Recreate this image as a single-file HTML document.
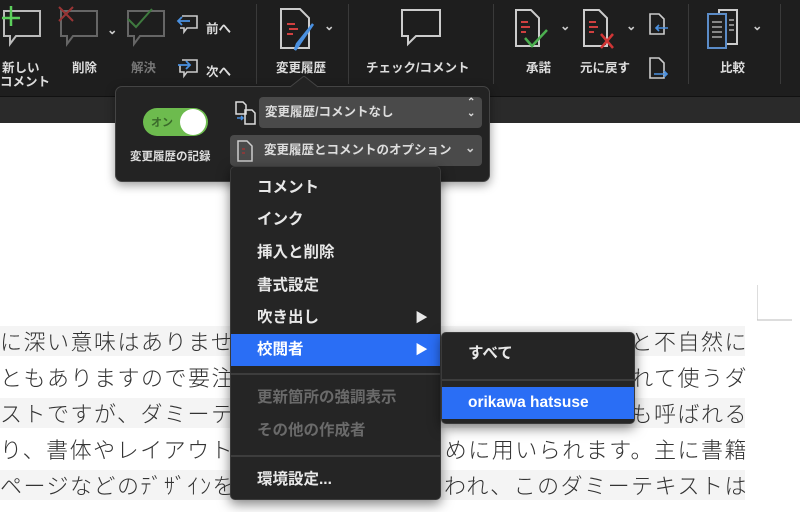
<!DOCTYPE html>
<html><head><meta charset="utf-8"><style>
*{margin:0;padding:0;box-sizing:border-box}
body{width:800px;height:512px;overflow:hidden;background:#fff;position:relative;font-family:"Liberation Sans","Noto Sans CJK JP",sans-serif}
.rib{position:absolute;left:0;top:0;width:800px;height:97px;background:#1e1e1e;border-bottom:1px solid #111}
.strip{position:absolute;left:0;top:97px;width:800px;height:26px;background:#2a2a2a}
.lbl{position:absolute;color:#ddd;font-size:12.5px;font-weight:bold;white-space:nowrap}
.sep{position:absolute;top:4px;width:1px;height:80px;background:#3a3a3a}
svg{position:absolute}
.doc{position:absolute;font-family:"Noto Sans CJK JP",sans-serif;font-size:22px;color:#333;white-space:nowrap;font-weight:300;letter-spacing:1.5px}
.r{right:52px;letter-spacing:1.5px}
.band{position:absolute;left:0;width:745px;height:30px;background:#f4f4f4}
.pop{position:absolute;left:115px;top:86px;width:375px;height:96px;background:#232323;border:1px solid #444;border-radius:7px;box-shadow:0 3px 10px rgba(0,0,0,.4)}
.menu{position:absolute;background:#252525;border:1px solid #3a3a3a;border-radius:5px;box-shadow:0 4px 12px rgba(0,0,0,.5)}
.mi{position:absolute;left:0;right:0;height:32px;line-height:32px;color:#e8e8e8;font-size:15.5px;font-weight:bold;padding-left:26px}
.hl{background:#2a6ef5;color:#fff}
.dis{color:#6a6a6a}
.msep{position:absolute;left:0;right:0;height:2px;background:#3d3d3d}
.ddl{position:absolute;background:#4a4a4a;border-radius:4px;color:#ddd;font-size:12.5px;font-weight:bold;padding-left:6px;line-height:30px}
</style></head><body>
<div class="rib"></div><div class="strip"></div>
<div class="sep" style="left:256px"></div><div class="sep" style="left:348px"></div><div class="sep" style="left:493px"></div><div class="sep" style="left:688px"></div><div class="sep" style="left:780px"></div>
<svg style="left:0;top:6px" width="45" height="42"><path d="M4 5H40V30H16L10 38V30H4Z" fill="none" stroke="#bbb" stroke-width="2"/><path d="M11 0V20M2 12H20" stroke="#5cd05c" stroke-width="2.5"/></svg>
<div class="lbl" style="left:2px;top:57px">新しい</div><div class="lbl" style="left:0;top:71px">コメント</div>
<svg style="left:57px;top:6px" width="45" height="42"><path d="M4 5H40V30H16L10 38V30H4Z" fill="none" stroke="#666" stroke-width="2"/><path d="M2 1L16 15M16 1L2 15" stroke="#9a3535" stroke-width="2"/></svg>
<div class="lbl" style="left:107px;top:22px;color:#ccc">⌄</div>
<div class="lbl" style="left:72px;top:57px">削除</div>
<svg style="left:124px;top:6px" width="45" height="42"><path d="M4 5H40V30H16L10 38V30H4Z" fill="none" stroke="#666" stroke-width="2"/><path d="M4 13L12 21L28 3" fill="none" stroke="#3f7a3f" stroke-width="2"/></svg>
<div class="lbl" style="left:131px;top:57px;color:#777">解決</div>
<svg style="left:176px;top:12px" width="24" height="24"><path d="M6 4H21V16H11L8 20V16H4" fill="none" stroke="#ccc" stroke-width="1.6"/><path d="M14 9H2M6 5L2 9L6 13" fill="none" stroke="#4a90e0" stroke-width="1.8"/></svg>
<div class="lbl" style="left:206px;top:18px">前へ</div>
<svg style="left:176px;top:56px" width="24" height="24"><path d="M6 4H21V16H11L8 20V16H4V9" fill="none" stroke="#ccc" stroke-width="1.6"/><path d="M2 9H14M10 5L14 9L10 13" fill="none" stroke="#4a90e0" stroke-width="1.8"/></svg>
<div class="lbl" style="left:206px;top:61px">次へ</div>
<svg style="left:278px;top:6px" width="42" height="46"><path d="M3 3H22L31 12V42H3Z" fill="none" stroke="#ccc" stroke-width="2"/><path d="M9 18H17M11 23H20M9 28H15" stroke="#d04040" stroke-width="2"/><path d="M35 18L20 40L17 44L19 38Z" fill="none" stroke="#4a90e0" stroke-width="2.5"/></svg>
<div class="lbl" style="left:324px;top:18px;color:#ccc">⌄</div>
<div class="lbl" style="left:276px;top:57px">変更履歴</div>
<svg style="left:400px;top:8px" width="44" height="40"><path d="M2 2H40V28H16L8 36V28H2Z" fill="none" stroke="#ccc" stroke-width="2"/></svg>
<div class="lbl" style="left:366px;top:57px">チェック/コメント</div>
<svg style="left:513px;top:8px" width="42" height="42"><path d="M3 2H18L26 10V38H3Z" fill="none" stroke="#ccc" stroke-width="2"/><path d="M8 14H15M8 19H17M8 24H13" stroke="#d04040" stroke-width="2"/><path d="M12 30L19 38L34 22" fill="none" stroke="#4caf50" stroke-width="2.5"/></svg>
<div class="lbl" style="left:560px;top:18px;color:#ccc">⌄</div>
<div class="lbl" style="left:526px;top:57px">承諾</div>
<svg style="left:581px;top:8px" width="42" height="42"><path d="M3 2H18L26 10V38H3Z" fill="none" stroke="#ccc" stroke-width="2"/><path d="M8 14H15M8 19H17M8 24H13" stroke="#d04040" stroke-width="2"/><path d="M20 26L32 40M32 26L20 40" stroke="#d03535" stroke-width="2.5"/></svg>
<div class="lbl" style="left:626px;top:18px;color:#ccc">⌄</div>
<div class="lbl" style="left:580px;top:57px">元に戻す</div>
<svg style="left:648px;top:12px" width="22" height="26"><path d="M2 2H11L16 7V22H2Z" fill="none" stroke="#ccc" stroke-width="1.6"/><path d="M20 16H8M11 13L8 16L11 19" fill="none" stroke="#4a90e0" stroke-width="1.6"/></svg>
<svg style="left:648px;top:56px" width="22" height="26"><path d="M2 2H11L16 7V22H2Z" fill="none" stroke="#ccc" stroke-width="1.6"/><path d="M6 18H19M16 15L19 18L16 21" fill="none" stroke="#4a90e0" stroke-width="1.6"/></svg>
<svg style="left:705px;top:8px" width="42" height="42"><path d="M14 2H32V36H14Z" fill="none" stroke="#ccc" stroke-width="2"/><path d="M3 6H21V40H3Z" fill="#1e1e1e" stroke="#5b8cc8" stroke-width="2"/><path d="M7 14H17M7 19H17M7 24H17M7 29H17M24 12H29M24 17H29M24 22H29" stroke="#aaa" stroke-width="1.5"/></svg>
<div class="lbl" style="left:752px;top:18px;color:#ccc">⌄</div>
<div class="lbl" style="left:720px;top:57px">比較</div>
<svg style="left:757px;top:285px" width="40" height="40"><path d="M0 0V35H35" fill="none" stroke="#bbb" stroke-width="1"/></svg>
<div class="band" style="top:326px"></div><div class="band" style="top:398px"></div><div class="band" style="top:470px"></div>
<div class="doc" style="left:0;top:325px">に深い意味はありませ</div><div class="doc r" style="top:325px">と不自然に</div>
<div class="doc" style="left:0;top:361px">ともありますので要注</div><div class="doc r" style="top:361px">れて使うダ</div>
<div class="doc" style="left:0;top:397px">ストですが、ダミーテ</div><div class="doc r" style="top:397px">も呼ばれる</div>
<div class="doc" style="left:0;top:433px">り、書体やレイアウト</div><div class="doc r" style="top:433px">めに用いられます。主に書籍</div>
<div class="doc" style="left:0;top:469px">ページなどのﾃﾞｻﾞｲﾝを</div><div class="doc r" style="top:469px">われ、このダミーテキストは</div>
<div class="pop"></div>
<svg style="left:290px;top:76px" width="28" height="12"><path d="M0 11L14 0L28 11" fill="#232323" stroke="#444"/></svg>
<div style="position:absolute;left:143px;top:108px;width:65px;height:28px;border-radius:14px;background:#6dbb4e"></div>
<div style="position:absolute;left:180px;top:109px;width:26px;height:26px;border-radius:13px;background:#fff"></div>
<div class="lbl" style="left:151px;top:114px;color:#3a6a2a;font-size:11px">オン</div>
<div class="lbl" style="left:130px;top:148px;font-size:11.5px">変更履歴の記録</div>
<svg style="left:234px;top:100px" width="24" height="28"><path d="M2 2H9L12 5V14H2Z M11 10H18L21 13V24H11Z" fill="none" stroke="#ddd" stroke-width="1.5"/><path d="M3 18H9M7 16L9 18L7 20" fill="none" stroke="#4a90e0" stroke-width="1.5"/></svg>
<div class="ddl" style="left:259px;top:97px;width:223px;height:31px">変更履歴/コメントなし</div>
<div class="lbl" style="left:467px;top:97px;font-size:10px">⌃<br>⌄</div>
<div class="ddl" style="left:230px;top:135px;width:252px;height:31px;padding-left:34px">変更履歴とコメントのオプション</div>
<svg style="left:236px;top:139px" width="20" height="24"><path d="M2 2H11L16 7V22H2Z" fill="none" stroke="#ccc" stroke-width="1.5"/><path d="M6 10H9M6 14H9" stroke="#a33" stroke-width="1.2"/></svg>
<div class="lbl" style="left:465px;top:140px;color:#ccc">⌄</div>
<div class="menu" style="left:230px;top:166px;width:211px;height:334px">
<div class="mi" style="top:5px">コメント</div>
<div class="mi" style="top:37px">インク</div>
<div class="mi" style="top:70px">挿入と削除</div>
<div class="mi" style="top:103px">書式設定</div>
<div class="mi" style="top:135px">吹き出し<span style="position:absolute;right:12px;font-size:13px">▶</span></div>
<div class="mi hl" style="top:167px">校閲者<span style="position:absolute;right:12px;font-size:13px">▶</span></div>
<div class="msep" style="top:206px"></div>
<div class="mi dis" style="top:215px">更新箇所の強調表示</div>
<div class="mi dis" style="top:248px">その他の作成者</div>
<div class="msep" style="top:288px"></div>
<div class="mi" style="top:297px">環境設定...</div>
</div>
<div class="menu" style="left:441px;top:332px;width:194px;height:92px">
<div class="mi" style="top:5px">すべて</div>
<div class="msep" style="top:46px"></div>
<div class="mi hl" style="top:54px">orikawa hatsuse</div>
</div>
</body></html>
